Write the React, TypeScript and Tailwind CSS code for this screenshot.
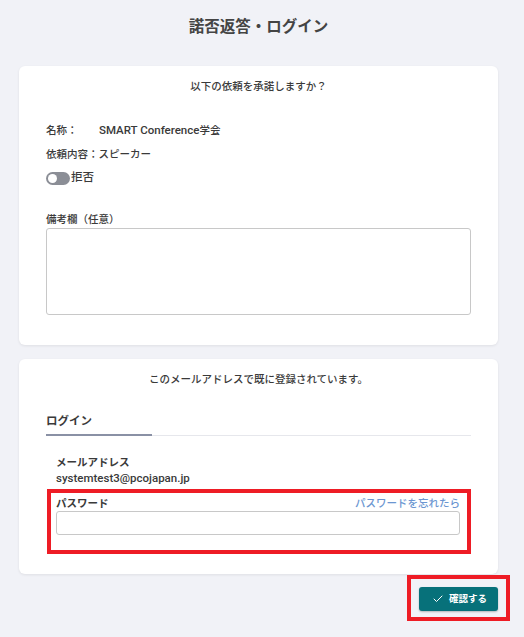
import React from 'react'
import { Check } from 'lucide-react'

const font = { fontFamily: "Roboto, 'Noto Sans CJK JP', sans-serif" }

const App = () => {
  return (
    <div className='min-h-[637px] w-[524px] bg-[#f1f2f7] text-[#3a3a3a]' style={font}>
      <div className='ml-[19px] w-[479px] pb-[15px]'>
        <h1 className='pt-[15px] h-[39px] text-center text-[15.5px] leading-6 font-bold text-[#444]'>諾否返答・ログイン</h1>

        <div className='mt-[27px] bg-white rounded-md shadow-[0_1px_3px_rgba(0,0,0,0.08)] px-[27px] pt-3 pb-[30px]'>
          <p className='text-center text-[10.5px] leading-[18px] font-medium'>以下の依頼を承諾しますか？</p>
          <div className='mt-[26px] flex items-center h-[18px] text-[10.5px] font-medium'>
            <span className='w-[53px]'>名称：</span>
            <span className='text-[11.5px]'>SMART Conference<span className='text-[10.5px]'>学会</span></span>
          </div>
          <p className='mt-[6px] text-[10.5px] leading-[18px] font-medium'>依頼内容：スピーカー</p>
          <div className='mt-[5px] flex items-center h-[18px] gap-[1px] text-[10.5px] font-medium'>
            <div className='w-6 h-[13px] rounded-full bg-[#8b8e96] flex items-center pl-[2px]'>
              <div className='w-[9px] h-[9px] rounded-full bg-white' />
            </div>
            <span className='text-[11.5px]'>拒否</span>
          </div>
          <p className='mt-[25px] text-[10.5px] leading-4 font-medium'>備考欄（任意）</p>
          <textarea className='block w-full h-[87px] border border-[#c8c8c8] rounded-[3px] resize-none outline-none' />
        </div>

        <div className='mt-[14px] bg-white rounded-md shadow-[0_1px_3px_rgba(0,0,0,0.08)] px-[27px] pt-3 pb-[20px]'>
          <p className='text-center text-[10.5px] leading-[18px] font-medium'>このメールアドレスで既に登録されています。</p>
          <div className='mt-[23px] border-b border-[#e6e7ec]'>
            <div className='w-[106px] border-b-2 border-[#8a91a5] pb-[4px] -mb-px text-[11.5px] leading-[18px] font-bold'>
              ログイン
            </div>
          </div>
          <div className='px-[10px] pt-[19px]'>
            <p className='text-[10.5px] leading-4 font-bold'>メールアドレス</p>
            <p className='mt-[-1px] text-[11.5px] leading-4 font-medium'>systemtest3@pcojapan.jp</p>
          </div>
          <div className='mt-[3px] ml-px border-4 border-[#ee1c25] pl-[5px] pr-[7px] pt-1 pb-[15px]'>
            <div className='flex justify-between items-center h-[14px] text-[10.5px]'>
              <span className='font-bold'>パスワード</span>
              <span className='font-medium text-[#6b96d1]'>パスワードを忘れたら</span>
            </div>
            <input type='password' className='block w-full h-6 border border-[#c8c8c8] rounded-[3px] outline-none' />
          </div>
        </div>

        <div className='mt-[13px] flex justify-end'>
          <div className='relative'>
            <div className='absolute -left-[12px] -right-[12px] -top-[12px] -bottom-[10px] border-4 border-[#ee1c25]' />
            <button className='relative flex items-center gap-[5px] w-[79px] h-6 pl-[13px] rounded-[3px] bg-[#07717a] text-white text-[9.5px] font-bold shadow-[0_1px_2px_rgba(0,0,0,0.25)]'>
              <Check size={12} strokeWidth={2} />
              確認する
            </button>
          </div>
        </div>
      </div>
    </div>
  )
}

export default App
